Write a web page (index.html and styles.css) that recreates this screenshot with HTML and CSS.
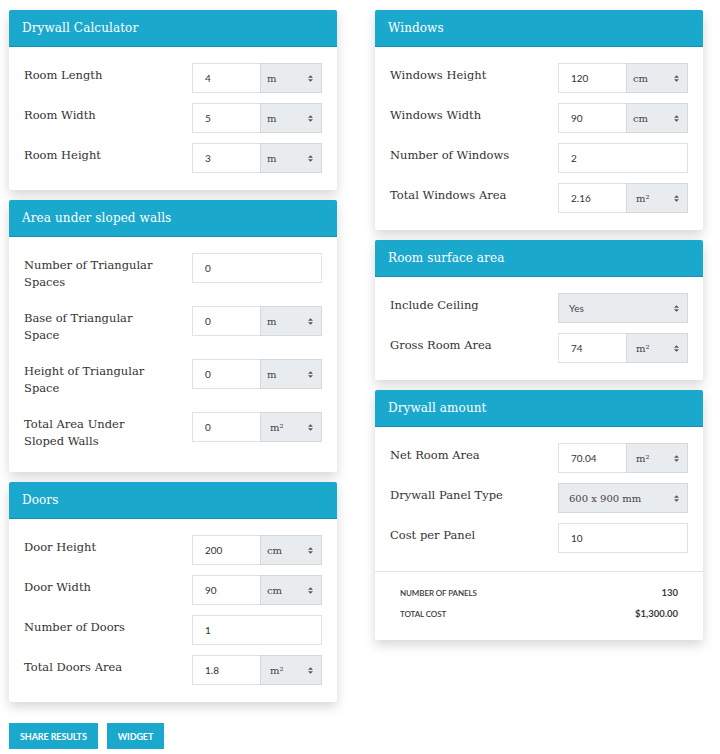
FILE: index.html
```html
<!DOCTYPE html>
<html>
<head>
<meta charset="utf-8">
<link rel="stylesheet" href="styles.css">
</head>
<body>
<div class="page">
  <div class="col">
    <section class="card">
      <h2 class="card-head">Drywall Calculator</h2>
      <div class="card-body">
        <div class="row"><div class="label">Room Length</div><div class="ctrl"><input class="num" value="4"><div class="unit"><span>m</span><svg class="arr" viewBox="0 0 6 8"><path d="M3 0L6 3H0Z M3 8L0 5H6Z"/></svg></div></div></div>
        <div class="row"><div class="label">Room Width</div><div class="ctrl"><input class="num" value="5"><div class="unit"><span>m</span><svg class="arr" viewBox="0 0 6 8"><path d="M3 0L6 3H0Z M3 8L0 5H6Z"/></svg></div></div></div>
        <div class="row"><div class="label">Room Height</div><div class="ctrl"><input class="num" value="3"><div class="unit"><span>m</span><svg class="arr" viewBox="0 0 6 8"><path d="M3 0L6 3H0Z M3 8L0 5H6Z"/></svg></div></div></div>
      </div>
    </section>
    <section class="card">
      <h2 class="card-head">Area under sloped walls</h2>
      <div class="card-body">
        <div class="row"><div class="label">Number of Triangular Spaces</div><div class="ctrl"><input class="num full" value="0"></div></div>
        <div class="row"><div class="label">Base of Triangular Space</div><div class="ctrl"><input class="num" value="0"><div class="unit"><span>m</span><svg class="arr" viewBox="0 0 6 8"><path d="M3 0L6 3H0Z M3 8L0 5H6Z"/></svg></div></div></div>
        <div class="row"><div class="label">Height of Triangular Space</div><div class="ctrl"><input class="num" value="0"><div class="unit"><span>m</span><svg class="arr" viewBox="0 0 6 8"><path d="M3 0L6 3H0Z M3 8L0 5H6Z"/></svg></div></div></div>
        <div class="row"><div class="label">Total Area Under Sloped Walls</div><div class="ctrl"><input class="num" value="0"><div class="unit"><span class="sq">m²</span><svg class="arr" viewBox="0 0 6 8"><path d="M3 0L6 3H0Z M3 8L0 5H6Z"/></svg></div></div></div>
      </div>
    </section>
    <section class="card">
      <h2 class="card-head">Doors</h2>
      <div class="card-body">
        <div class="row"><div class="label">Door Height</div><div class="ctrl"><input class="num" value="200"><div class="unit"><span>cm</span><svg class="arr" viewBox="0 0 6 8"><path d="M3 0L6 3H0Z M3 8L0 5H6Z"/></svg></div></div></div>
        <div class="row"><div class="label">Door Width</div><div class="ctrl"><input class="num" value="90"><div class="unit"><span>cm</span><svg class="arr" viewBox="0 0 6 8"><path d="M3 0L6 3H0Z M3 8L0 5H6Z"/></svg></div></div></div>
        <div class="row"><div class="label">Number of Doors</div><div class="ctrl"><input class="num full" value="1"></div></div>
        <div class="row"><div class="label">Total Doors Area</div><div class="ctrl"><input class="num" value="1.8"><div class="unit"><span class="sq">m²</span><svg class="arr" viewBox="0 0 6 8"><path d="M3 0L6 3H0Z M3 8L0 5H6Z"/></svg></div></div></div>
      </div>
    </section>
    <div class="buttons">
      <button class="btn">Share Results</button>
      <button class="btn">Widget</button>
    </div>
  </div>
  <div class="col">
    <section class="card">
      <h2 class="card-head">Windows</h2>
      <div class="card-body">
        <div class="row"><div class="label">Windows Height</div><div class="ctrl"><input class="num" value="120"><div class="unit"><span>cm</span><svg class="arr" viewBox="0 0 6 8"><path d="M3 0L6 3H0Z M3 8L0 5H6Z"/></svg></div></div></div>
        <div class="row"><div class="label">Windows Width</div><div class="ctrl"><input class="num" value="90"><div class="unit"><span>cm</span><svg class="arr" viewBox="0 0 6 8"><path d="M3 0L6 3H0Z M3 8L0 5H6Z"/></svg></div></div></div>
        <div class="row"><div class="label">Number of Windows</div><div class="ctrl"><input class="num full" value="2"></div></div>
        <div class="row"><div class="label">Total Windows Area</div><div class="ctrl"><input class="num" value="2.16"><div class="unit"><span class="sq">m²</span><svg class="arr" viewBox="0 0 6 8"><path d="M3 0L6 3H0Z M3 8L0 5H6Z"/></svg></div></div></div>
      </div>
    </section>
    <section class="card">
      <h2 class="card-head">Room surface area</h2>
      <div class="card-body">
        <div class="row"><div class="label">Include Ceiling</div><div class="ctrl"><div class="unit wide"><span class="sans">Yes</span><svg class="arr" viewBox="0 0 6 8"><path d="M3 0L6 3H0Z M3 8L0 5H6Z"/></svg></div></div></div>
        <div class="row"><div class="label">Gross Room Area</div><div class="ctrl"><input class="num" value="74"><div class="unit"><span class="sq">m²</span><svg class="arr" viewBox="0 0 6 8"><path d="M3 0L6 3H0Z M3 8L0 5H6Z"/></svg></div></div></div>
      </div>
    </section>
    <section class="card">
      <h2 class="card-head">Drywall amount</h2>
      <div class="card-body">
        <div class="row"><div class="label">Net Room Area</div><div class="ctrl"><input class="num" value="70.04"><div class="unit"><span class="sq">m²</span><svg class="arr" viewBox="0 0 6 8"><path d="M3 0L6 3H0Z M3 8L0 5H6Z"/></svg></div></div></div>
        <div class="row"><div class="label">Drywall Panel Type</div><div class="ctrl"><div class="unit wide"><span>600 x 900 mm</span><svg class="arr" viewBox="0 0 6 8"><path d="M3 0L6 3H0Z M3 8L0 5H6Z"/></svg></div></div></div>
        <div class="row"><div class="label">Cost per Panel</div><div class="ctrl"><input class="num full" value="10"></div></div>
      </div>
      <div class="summary">
        <div class="sum-row"><span>Number of Panels</span><span class="val">130</span></div>
        <div class="sum-row"><span>Total Cost</span><span class="val">$1,300.00</span></div>
      </div>
    </section>
  </div>
</div>
</body>
</html>
```
FILE: styles.css
```css
* { box-sizing: border-box; }
html, body { margin: 0; padding: 0; background: #fff; }
body { font-family: "DejaVu Serif", serif; color: #3a3a3a; }
.page {
  display: flex;
  gap: 38px;
  padding: 10px 0 0 9px;
  align-items: flex-start;
}
.col {
  width: 328px;
  display: flex;
  flex-direction: column;
  gap: 10px;
}
.card {
  background: #fff;
  border-radius: 2px;
  box-shadow: 0 5px 12px rgba(0,0,0,0.16);
}
.card-head {
  margin: 0;
  height: 37px;
  background: #1ba8cd;
  border-bottom: 1px solid #1592b3;
  border-radius: 2px 2px 0 0;
  color: #fff;
  font-weight: normal;
  font-size: 12px;
  line-height: 36px;
  padding-left: 13px;
  letter-spacing: 0.1px;
}
.card-body {
  padding: 16px 15px 17px 15px;
  display: flex;
  flex-direction: column;
  gap: 10px;
}
.row {
  display: flex;
  justify-content: space-between;
  align-items: flex-start;
}
.label {
  width: 130px;
  font-size: 11.5px;
  line-height: 17px;
  padding: 4px 0 5px;
  color: #333;
}
.ctrl {
  display: flex;
  width: 130px;
  height: 30px;
}
.num {
  width: 68px;
  height: 30px;
  margin: 0;
  border: 1px solid #dfe1e3;
  border-right: none;
  padding: 0 0 0 12px;
  font-family: Lato, sans-serif;
  font-size: 10px;
  color: #333;
  background: #fff;
  outline: none;
}
.num.full { width: 130px; border-right: 1px solid #dfe1e3; }
.unit {
  flex: 1;
  height: 30px;
  background: #e9ecef;
  border: 1px solid #d6d9dc;
  display: flex;
  align-items: center;
  justify-content: space-between;
  padding: 0 8px 0 6px;
  font-size: 10px;
  color: #444;
}
.unit.wide { padding-left: 10px; }
.unit .sq { padding-left: 3px; }
.unit .sans { font-family: Lato, sans-serif; }
.arr { width: 5px; height: 7px; fill: #555; }
.summary {
  border-top: 1px solid #e3e3e3;
  margin-top: 1px;
  padding: 14px 25px 19px 25px;
  display: flex;
  flex-direction: column;
  gap: 7px;
}
.sum-row {
  display: flex;
  justify-content: space-between;
  align-items: center;
  font-family: Lato, sans-serif;
  font-size: 8px;
  line-height: 14px;
  text-transform: uppercase;
  font-weight: 600;
  color: #3a3a3a;
  letter-spacing: -0.1px;
}
.sum-row .val { font-weight: 700; font-size: 9.5px; letter-spacing: 0; }
.buttons {
  display: flex;
  gap: 9px;
  margin-top: 11px;
}
.btn {
  height: 26px;
  border: none;
  border-radius: 0;
  background: #1ba8cd;
  color: #fff;
  font-family: Lato, sans-serif;
  font-weight: 700;
  font-size: 9px;
  text-transform: uppercase;
  padding: 0 11px;
  letter-spacing: -0.1px;
}
```
